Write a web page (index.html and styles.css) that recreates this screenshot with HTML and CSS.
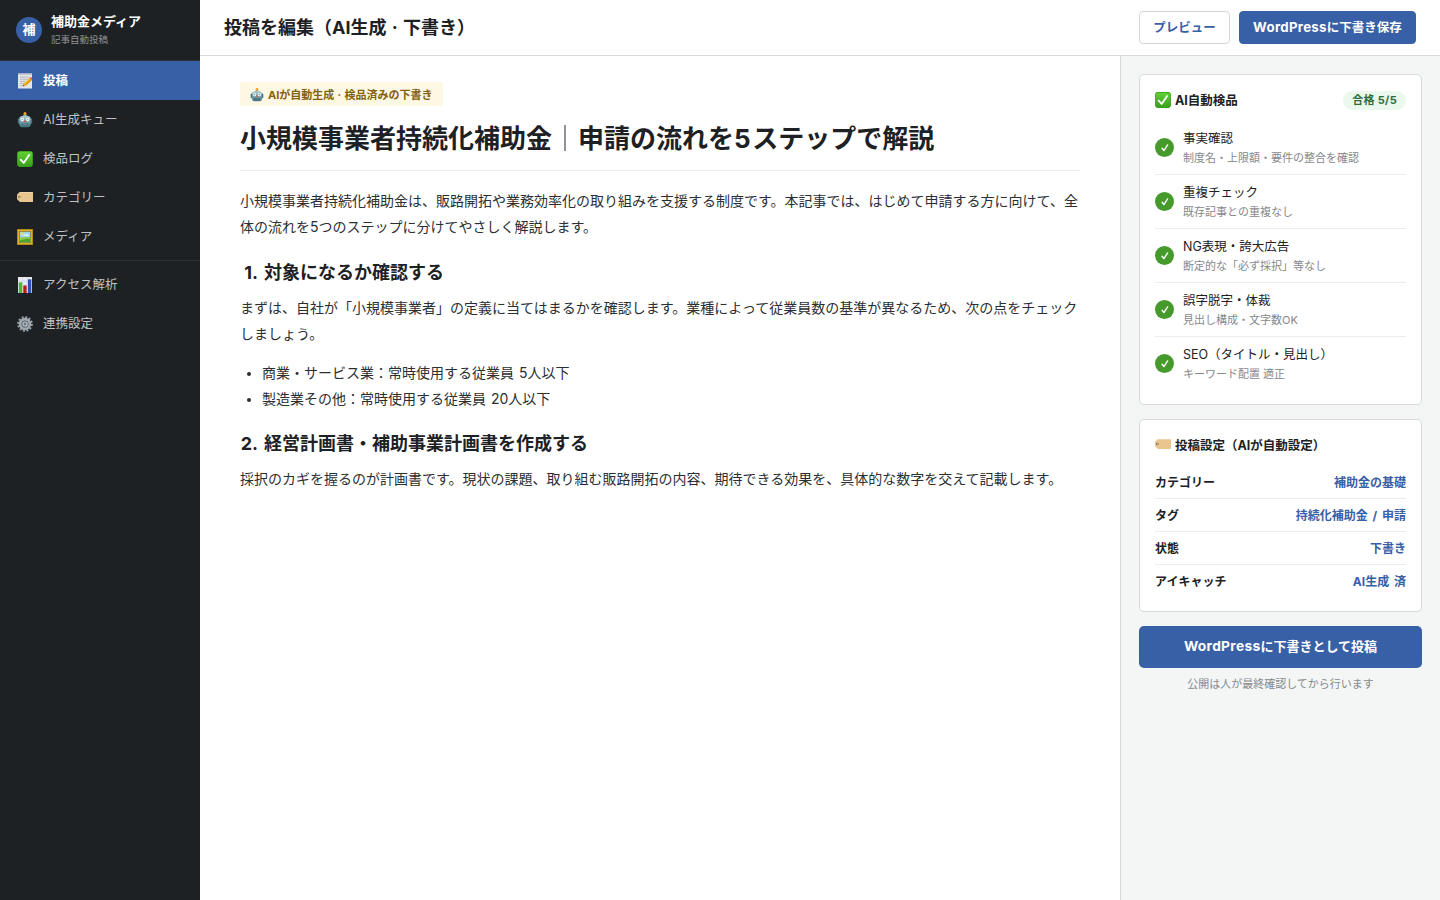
FILE: index.html
```
<!DOCTYPE html>
<html lang="ja">
<head>
    <meta charset="UTF-8">
    <meta name="viewport" content="width=device-width, initial-scale=1.0">
    <title>投稿を編集 - 補助金メディア</title>
    <link rel="stylesheet" href="styles.css">
</head>
<body>
    <!-- Shared icons -->
    <svg class="sprite" aria-hidden="true">
        <defs>
            <linearGradient id="steel" x1="0" y1="0" x2="0" y2="1">
                <stop offset="0" stop-color="#b3ced3"/>
                <stop offset="1" stop-color="#427582"/>
            </linearGradient>
            <linearGradient id="green" x1="0" y1="0" x2="0" y2="1">
                <stop offset="0" stop-color="#62cf35"/>
                <stop offset="1" stop-color="#38a31b"/>
            </linearGradient>
        </defs>
        <symbol id="i-memo" viewBox="0 0 16 16">
            <path d="M1 .5h14v15H1z" fill="#e4e6e4"/>
            <path d="M1 .5h14v1.2H1z" fill="#b9bdbd"/>
            <path d="M3 4h9M3 6.2h8M3 8.4h5M3 10.6h4M3 12.8h4" stroke="#aeb2b4" stroke-width=".9"/>
            <path d="M6 13.2l1-3 6-5.6 2 2-6 5.8z" fill="#f3bd22"/>
            <path d="M8.2 11.6l6-5.4.8.7-6 5.6z" fill="#d28c14"/>
            <path d="M12.2 5.3l1.3-1.1c.8-.5 2.4 1 1.7 1.8L14 7.1z" fill="#e5655d"/>
            <path d="M6 13.2l.6-1.8 1.1 1.1z" fill="#3b3430"/>
        </symbol>
        <symbol id="i-robot" viewBox="0 0 16 16">
            <path d="M6 4C6.2 2.6 7 2.2 8 2.2s1.8.4 2 1.8z" fill="#5f98a4"/>
            <circle cx="8" cy="1.6" r="1.5" fill="#f0a52a"/>
            <rect x=".8" y="6.2" width="3" height="5.6" rx="1.2" fill="#3f7380"/>
            <rect x="12.2" y="6.2" width="3" height="5.6" rx="1.2" fill="#3f7380"/>
            <path d="M2.4 6C2.6 4.2 4.6 3.4 8 3.4s5.4.8 5.6 2.6v6.6c0 1.6-1 2.6-2.8 2.6H5.2c-1.8 0-2.8-1-2.8-2.6z" fill="url(#steel)"/>
            <circle cx="5.3" cy="7.6" r="1.8" fill="#eef7f7"/>
            <circle cx="10.7" cy="7.6" r="1.8" fill="#eef7f7"/>
            <circle cx="5.3" cy="7.6" r=".7" fill="#5f95a0"/>
            <circle cx="10.7" cy="7.6" r=".7" fill="#5f95a0"/>
            <path d="M8 7.8l1.2 2.3H6.8z" fill="#d75342"/>
            <rect x="4.8" y="11.5" width="6.4" height="1.9" rx=".8" fill="#2f5c68"/>
            <path d="M5.8 12.4h4.4" stroke="#9fc0c6" stroke-width=".6"/>
        </symbol>
        <symbol id="i-check" viewBox="0 0 16 16">
            <rect x=".1" y=".1" width="15.8" height="15.8" rx="2.8" fill="#369c1b"/>
            <rect x=".7" y=".7" width="14.6" height="14.4" rx="2.3" fill="url(#green)"/>
            <path d="M3.7 8.6l3 3.3 5.4-8" fill="none" stroke="#fff" stroke-width="1.8" stroke-linecap="round" stroke-linejoin="round"/>
        </symbol>
        <symbol id="i-tag" viewBox="0 0 16 16">
            <path d="M3 2h13v10H3L.7 10C.2 9.5 0 9 0 8.4V5.6C0 5 .2 4.5.7 4z" fill="#e9c68f"/>
            <path d="M3 2h13v.8H3L.7 4.6V4z" fill="#f4dab0"/>
            <circle cx="2.3" cy="7" r="1.3" fill="#8a7255"/>
            <circle cx="2.5" cy="7.2" r=".6" fill="#d4cbbd"/>
        </symbol>
        <symbol id="i-picture" viewBox="0 0 16 16">
            <path d="M0 0h16v16H0z" fill="#a47a14"/>
            <path d="M.7.7h14.6v14.6H.7z" fill="#e0b02d"/>
            <path d="M2 2h12v12H2z" fill="#8a6a17"/>
            <path d="M2.7 2.7h10.6v10.6H2.7z" fill="#9bd5ee"/>
            <circle cx="4.7" cy="4.8" r="1.3" fill="#f8df4c"/>
            <path d="M6 6.5c1-1.6 2-1.3 2.6-.5 1-1.4 2.8-.9 3.2.7z" fill="#fff"/>
            <path d="M2.7 9c3-1.5 6.4-.8 10.6-1v5.3H2.7z" fill="#8bcc48"/>
            <path d="M2.7 11.2c3 .2 6-2 10.6-1.2v3.3H2.7z" fill="#4ca62e"/>
        </symbol>
        <symbol id="i-chart" viewBox="0 0 16 16">
            <path d="M1 0h14v16H1z" fill="#e5eaf0"/>
            <path d="M1 4h14M1 8h14M1 12h14M5.5 0v16M10.3 0v16" stroke="#c7d0da" stroke-width=".5"/>
            <path d="M1.8 5.3h3.4V16H1.8z" fill="#55b52d"/>
            <path d="M6.3 8.5h3.3V16H6.3z" fill="#b81818"/>
            <path d="M10.9 2.3h3.4V16h-3.4z" fill="#2d50bd"/>
        </symbol>
        <symbol id="i-gear" viewBox="0 0 16 16">
            <circle cx="8" cy="8" r="6.8" fill="none" stroke="#929ba3" stroke-width="2.1" stroke-dasharray="2 1.56"/>
            <circle cx="8" cy="8" r="4.8" fill="none" stroke="#a1a9b0" stroke-width="2.9"/>
            <circle cx="8" cy="8" r="3.4" fill="#6c757e"/>
            <circle cx="8" cy="8" r="2" fill="none" stroke="#b9c0c5" stroke-width="1.2"/>
        </symbol>
        <symbol id="i-tick" viewBox="0 0 10 10">
            <path d="M2.1 5.3l1.8 2.3 3.7-5.7" fill="none" stroke="#fff" stroke-width="1.4" stroke-linecap="round" stroke-linejoin="round"/>
        </symbol>
    </svg>

    <div class="app">
        <!-- Sidebar -->
        <aside class="sidebar">
            <div class="brand">
                <div class="brand-mark">補</div>
                <div>
                    <div class="brand-name">補助金メディア</div>
                    <div class="brand-sub">記事自動投稿</div>
                </div>
            </div>
            <nav class="nav">
                <a class="nav-item active"><svg class="emoji"><use href="#i-memo"/></svg>投稿</a>
                <a class="nav-item"><svg class="emoji"><use href="#i-robot"/></svg>AI生成キュー</a>
                <a class="nav-item"><svg class="emoji"><use href="#i-check"/></svg>検品ログ</a>
                <a class="nav-item"><svg class="emoji"><use href="#i-tag"/></svg>カテゴリー</a>
                <a class="nav-item"><svg class="emoji"><use href="#i-picture"/></svg>メディア</a>
                <div class="nav-sep"></div>
                <a class="nav-item"><svg class="emoji"><use href="#i-chart"/></svg>アクセス解析</a>
                <a class="nav-item"><svg class="emoji"><use href="#i-gear"/></svg>連携設定</a>
            </nav>
        </aside>

        <div class="main">
            <!-- Top bar -->
            <header class="topbar">
                <div class="topbar-title">投稿を編集（AI生成 · 下書き）</div>
                <div class="actions">
                    <button class="btn">プレビュー</button>
                    <button class="btn btn-primary"><span class="latin">WordPress</span>に下書き保存</button>
                </div>
            </header>

            <div class="content">
                <!-- Article -->
                <article class="editor">
                    <div class="ai-badge"><svg class="emoji"><use href="#i-robot"/></svg>AIが自動生成 · 検品済みの下書き</div>
                    <h1>小規模事業者持続化補助金<span class="bar">｜</span>申請の流れを<span class="digit">5</span>ステップで解説</h1>
                    <p>小規模事業者持続化補助金は、販路開拓や業務効率化の取り組みを支援する制度です。本記事では、はじめて申請する方に向けて、全体の流れを5つのステップに分けてやさしく解説します。</p>
                    <h2><span class="num">1.</span>対象になるか確認する</h2>
                    <p>まずは、自社が「小規模事業者」の定義に当てはまるかを確認します。業種によって従業員数の基準が異なるため、次の点をチェックしましょう。</p>
                    <ul>
                        <li>商業・サービス業：常時使用する従業員 5人以下</li>
                        <li>製造業その他：常時使用する従業員 20人以下</li>
                    </ul>
                    <h2><span class="num">2.</span>経営計画書・補助事業計画書を作成する</h2>
                    <p>採択のカギを握るのが計画書です。現状の課題、取り組む販路開拓の内容、期待できる効果を、具体的な数字を交えて記載します。</p>
                </article>

                <!-- Right panel -->
                <aside class="panel">
                    <section class="card">
                        <div class="card-head">
                            <svg class="emoji"><use href="#i-check"/></svg>
                            <span class="card-title">AI自動検品</span>
                            <span class="pill">合格 5/5</span>
                        </div>
                        <div class="check">
                            <span class="check-dot"><svg><use href="#i-tick"/></svg></span>
                            <div class="check-text">
                                <div class="check-name">事実確認</div>
                                <div class="check-note">制度名・上限額・要件の整合を確認</div>
                            </div>
                        </div>
                        <div class="check">
                            <span class="check-dot"><svg><use href="#i-tick"/></svg></span>
                            <div class="check-text">
                                <div class="check-name">重複チェック</div>
                                <div class="check-note">既存記事との重複なし</div>
                            </div>
                        </div>
                        <div class="check">
                            <span class="check-dot"><svg><use href="#i-tick"/></svg></span>
                            <div class="check-text">
                                <div class="check-name">NG表現・誇大広告</div>
                                <div class="check-note">断定的な「必ず採択」等なし</div>
                            </div>
                        </div>
                        <div class="check">
                            <span class="check-dot"><svg><use href="#i-tick"/></svg></span>
                            <div class="check-text">
                                <div class="check-name">誤字脱字・体裁</div>
                                <div class="check-note">見出し構成・文字数OK</div>
                            </div>
                        </div>
                        <div class="check">
                            <span class="check-dot"><svg><use href="#i-tick"/></svg></span>
                            <div class="check-text">
                                <div class="check-name">SEO（タイトル・見出し）</div>
                                <div class="check-note">キーワード配置 適正</div>
                            </div>
                        </div>
                    </section>

                    <section class="card">
                        <div class="card-head">
                            <svg class="emoji"><use href="#i-tag"/></svg>
                            <span class="card-title">投稿設定（AIが自動設定）</span>
                        </div>
                        <div class="row"><span>カテゴリー</span><b>補助金の基礎</b></div>
                        <div class="row"><span>タグ</span><b>持続化補助金 / 申請</b></div>
                        <div class="row"><span>状態</span><b>下書き</b></div>
                        <div class="row"><span>アイキャッチ</span><b>AI生成 済</b></div>
                    </section>

                    <button class="submit"><span class="latin">WordPress</span>に下書きとして投稿</button>
                    <div class="note">公開は人が最終確認してから行います</div>
                </aside>
            </div>
        </div>
    </div>
</body>
</html>
```
FILE: styles.css
```
* {
    box-sizing: border-box;
}

body {
    margin: 0;
    font-family: Inter, "Noto Sans CJK JP", sans-serif;
    color: #1d2124;
    background: #fff;
}

button {
    font-family: inherit;
}

.sprite {
    position: absolute;
    width: 0;
    height: 0;
}

.emoji {
    width: 16px;
    height: 16px;
    flex: none;
}

.latin {
    font-size: 1.06em;
    letter-spacing: 0.3px;
}

.app {
    display: flex;
    height: 100vh;
    overflow: hidden;
}

/* Sidebar */
.sidebar {
    width: 200px;
    flex: none;
    background: #1d2124;
    color: #c0c2c5;
}

.brand {
    display: flex;
    align-items: center;
    gap: 9px;
    height: 61px;
    padding: 0 16px;
    border-bottom: 1px solid #2c3034;
}

.brand-mark {
    display: flex;
    align-items: center;
    justify-content: center;
    width: 26px;
    height: 26px;
    padding-bottom: 2px;
    border-radius: 50%;
    background: #3860a6;
    color: #fff;
    font-size: 13px;
    font-weight: 700;
    line-height: 24px;
}

.brand-name {
    color: #fff;
    font-size: 13px;
    font-weight: 700;
    line-height: 20px;
}

.brand-sub {
    padding: 1px 0 2px;
    color: #8e9195;
    font-size: 9.5px;
    line-height: 15px;
}

.nav-item {
    display: flex;
    align-items: center;
    gap: 10px;
    height: 39px;
    padding: 0 17px;
    font-size: 12.5px;
    line-height: 20px;
}

.nav-item.active {
    background: #3860a6;
    color: #fff;
    font-weight: 700;
}

.nav-sep {
    height: 1px;
    margin: 4px 0;
    background: #2c3034;
}

/* Top bar */
.main {
    display: flex;
    flex-direction: column;
    flex: 1;
}

.topbar {
    display: flex;
    align-items: center;
    justify-content: space-between;
    height: 56px;
    padding: 0 24px;
    border-bottom: 1px solid #d6d8da;
}

.topbar-title {
    font-size: 18px;
    font-weight: 700;
    line-height: 28px;
    word-spacing: 1px;
}

.actions {
    display: flex;
    gap: 9px;
}

.btn {
    height: 33px;
    padding: 0 13.2px;
    border: 1px solid #d3d6da;
    border-radius: 4px;
    background: #fff;
    color: #3860a6;
    font-size: 12.5px;
    font-weight: 700;
    line-height: 20px;
}

.btn-primary {
    border-color: #3860a6;
    background: #3860a6;
    color: #fff;
}

.content {
    display: flex;
    flex: 1;
}

/* Article */
.editor {
    flex: 1;
    padding: 26px 40px;
}

.ai-badge {
    display: inline-flex;
    align-items: center;
    gap: 4px;
    height: 24px;
    padding: 2px 10px 0;
    border-radius: 3px;
    background: #fcf8e3;
    color: #85600f;
    font-size: 11px;
    font-weight: 700;
    line-height: 20px;
    word-spacing: 0.7px;
    vertical-align: top;
}

.ai-badge .emoji {
    width: 14px;
    height: 14px;
}

.editor h1 {
    margin: 13px 0 16.7px;
    padding-bottom: 11px;
    border-bottom: 1px solid #ececee;
    font-size: 26px;
    font-weight: 700;
    line-height: 40px;
}

.editor .bar {
    display: inline-block;
    font-weight: 300;
    will-change: transform;
}

.editor .digit {
    padding-right: 1.5px;
}

.editor p {
    margin: 0 0 12px;
    color: #2b2f33;
    font-size: 14px;
    line-height: 26.6px;
}

.editor h2 {
    margin: 18px 0 8px;
    font-size: 18px;
    font-weight: 700;
    line-height: 28px;
}

.editor .num {
    display: inline-block;
    width: 24px;
    padding-right: 6px;
    text-align: right;
}

.editor ul {
    margin: 0 0 10px;
    padding-left: 22px;
    color: #2b2f33;
    font-size: 14px;
    line-height: 26px;
}

.editor li {
    word-spacing: 1px;
}

.editor li::marker {
    font-size: 12px;
}

/* Right panel */
.panel {
    width: 320px;
    padding: 18px;
    border-left: 1px solid #d6d8da;
    background: #f4f6f6;
}

.card {
    margin-bottom: 14px;
    padding: 14px 15px;
    border: 1px solid #d6d8da;
    border-radius: 5px;
    background: #fff;
}

.card-head {
    display: flex;
    align-items: center;
    gap: 4px;
    height: 22px;
    margin-bottom: 10px;
    font-size: 12.5px;
    font-weight: 700;
    line-height: 20px;
}

.card-title {
    padding-top: 2px;
}

.pill {
    margin-left: auto;
    padding: 0 9px;
    border-radius: 10px;
    background: #ebf8ed;
    color: #2c6e38;
    font-size: 11px;
    line-height: 19px;
    letter-spacing: 0.3px;
}

.check {
    display: flex;
    align-items: center;
    gap: 9px;
    height: 54px;
    border-bottom: 1px solid #ececee;
}

.check:last-child {
    height: 53px;
    border-bottom: none;
}

.check-dot {
    display: flex;
    align-items: center;
    justify-content: center;
    width: 19px;
    height: 19px;
    border-radius: 50%;
    background: #46992b;
}

.check-dot svg {
    width: 10px;
    height: 10px;
}

.check-text {
    padding-top: 2px;
}

.check-name {
    font-size: 12.5px;
    line-height: 20px;
}

.check-note {
    color: #85888d;
    font-size: 11px;
    line-height: 19px;
}

.row {
    display: flex;
    align-items: center;
    justify-content: space-between;
    height: 33px;
    padding-top: 2px;
    border-bottom: 1px solid #ececee;
    font-size: 12px;
    font-weight: 600;
    line-height: 20px;
}

.row:last-child {
    height: 32px;
    border-bottom: none;
}

.row b {
    color: #3860a6;
    font-weight: 700;
    word-spacing: 2px;
}

.submit {
    display: block;
    width: 100%;
    height: 42px;
    padding: 0 0 3px;
    border: none;
    border-radius: 5px;
    background: #3860a6;
    color: #fff;
    font-size: 13px;
    font-weight: 700;
    line-height: 20px;
}

.note {
    margin-top: 7px;
    color: #85888d;
    font-size: 11px;
    line-height: 18px;
    text-align: center;
}
```
